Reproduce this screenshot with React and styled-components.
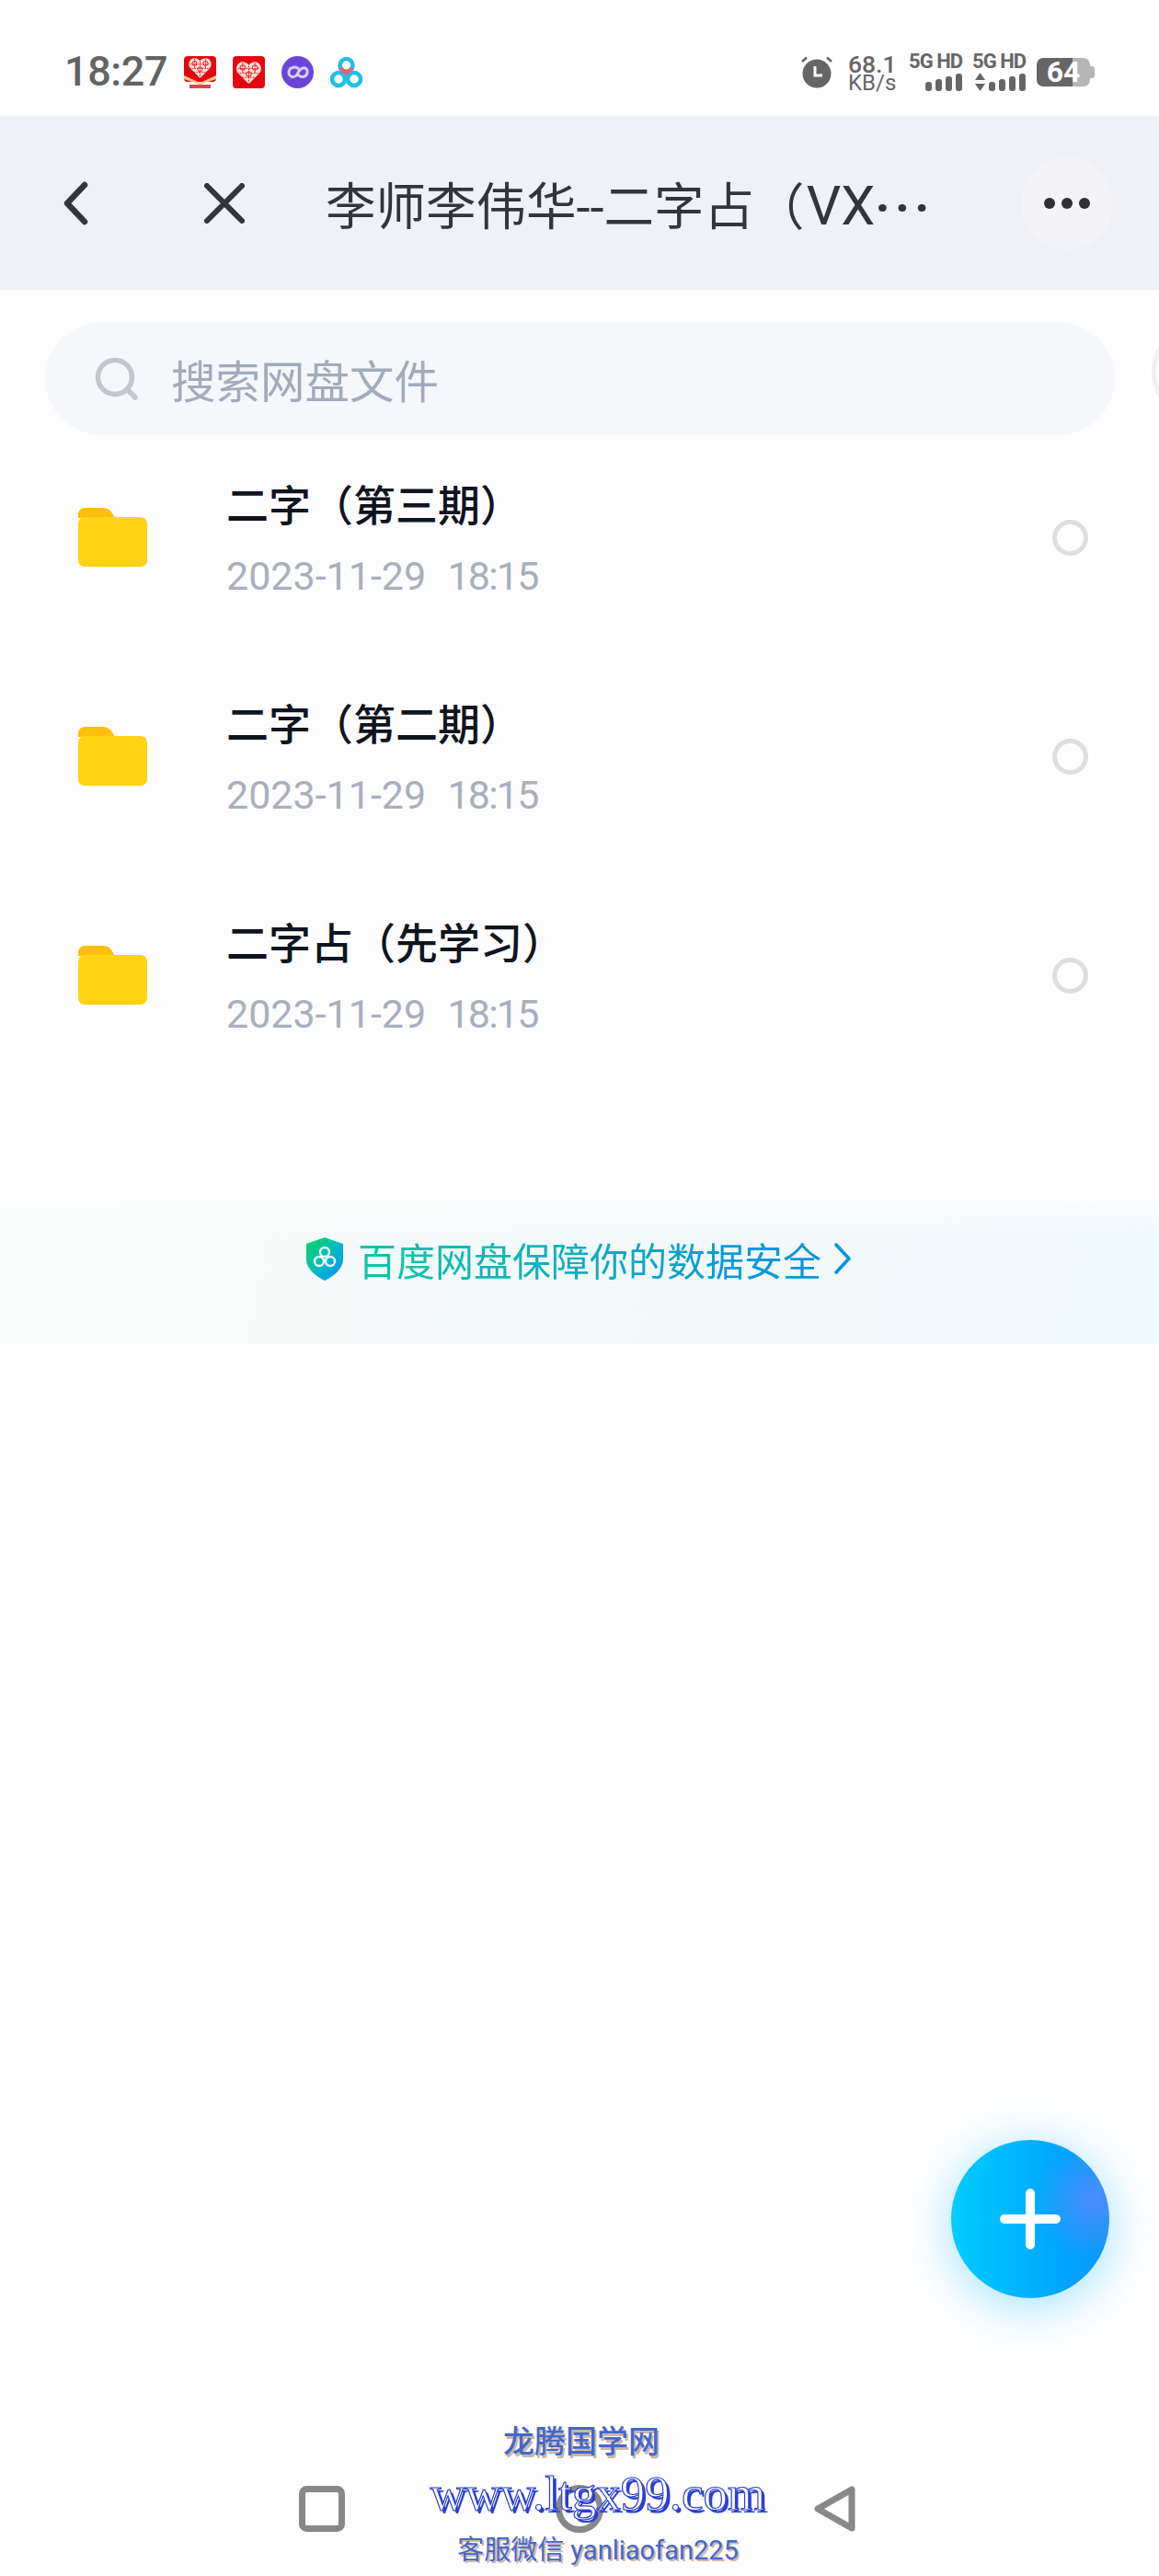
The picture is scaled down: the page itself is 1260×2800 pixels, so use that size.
import React from "react";
import styled, { createGlobalStyle } from "styled-components";

const GlobalStyle = createGlobalStyle`
  html, body {
    margin: 0;
    padding: 0;
    background: #fdfdfe;
  }
  * {
    box-sizing: border-box;
  }
`;

const CJK = `Roboto, "Noto Sans CJK SC", sans-serif`;

const Page = styled.div`
  position: relative;
  display: flex;
  flex-direction: column;
  width: 1260px;
  height: 2800px;
  overflow: hidden;
  background: #fdfdfe;
  font-family: ${CJK};
`;

const StatusBar = styled.div`
  display: flex;
  align-items: center;
  justify-content: space-between;
  height: 126px;
  padding: 30px 70px 0 70px;
  background: #fefefe;
`;

const StatusLeft = styled.div`
  display: flex;
  align-items: center;
`;

const Clock = styled.span`
  width: 130px;
  margin-top: -2px;
  font-size: 45px;
  font-weight: 500;
  letter-spacing: -0.4px;
  color: #636363;
`;

const AppIcons = styled.div`
  display: flex;
  gap: 18px;
`;

const StatusRight = styled.div`
  display: flex;
  align-items: center;
  color: #666;
`;

const Speed = styled.div`
  display: flex;
  flex-direction: column;
  align-items: flex-start;
  width: 50px;
  margin: 4px 17px 0 16px;
  font-size: 26.5px;
  line-height: 21px;
  font-weight: 500;
  white-space: nowrap;
`;

const SpeedUnit = styled.span`
  font-size: 24px;
  font-weight: 400;
`;

const Network = styled.div`
  display: flex;
  flex-direction: column;
  align-items: flex-end;
  gap: 4px;
  width: 57px;
  margin-right: 12px;
`;

const NetworkLabel = styled.span`
  font-size: 22px;
  line-height: 18px;
  font-weight: 700;
  letter-spacing: -1px;
  white-space: nowrap;
`;

const Bars = styled.div`
  display: flex;
  align-items: flex-end;
  gap: 4px;
  height: 19px;
`;

const Bar = styled.i`
  display: block;
  width: 7px;
  height: ${({ $h }) => $h}px;
  border-radius: 3px;
  background: #666;
`;

const Battery = styled.div`
  position: relative;
  display: flex;
  align-items: center;
  justify-content: center;
  width: 58px;
  height: 31px;
  margin-right: 5px;
  border-radius: 7px;
  background: linear-gradient(90deg, #666 67%, #b6b6b6 67%);
  color: #fff;
  font-size: 32px;
  line-height: 31px;
  font-weight: 700;

  &::after {
    content: "";
    position: absolute;
    right: -5px;
    top: 9px;
    width: 5px;
    height: 13px;
    border-radius: 0 3px 3px 0;
    background: #b6b6b6;
  }
`;

const Toolbar = styled.div`
  display: flex;
  align-items: center;
  height: 189px;
  padding: 0 50px 0 68px;
  background: #eff1f6;
`;

const BackButton = styled.div`
  display: flex;
  width: 154px;
`;

const CloseButton = styled.div`
  display: flex;
  width: 132px;
`;

const Title = styled.div`
  font-size: 54.5px;
  color: #33353a;
  white-space: nowrap;
`;

const TitleLatin = styled.span`
  margin-left: 2px;
  font-size: 59px;
`;

const TitleDots = styled.span`
  font-weight: 700;
  letter-spacing: 5px;
`;

const MoreButton = styled.div`
  display: flex;
  align-items: center;
  justify-content: center;
  gap: 7px;
  width: 100px;
  height: 100px;
  margin-left: auto;
  border-radius: 50%;
  background: #f4f4f6;
`;

const MoreDot = styled.i`
  display: block;
  width: 12px;
  height: 12px;
  border-radius: 50%;
  background: #2e3036;
`;

const SearchRow = styled.div`
  padding: 35px 48px 0 49px;
`;

const SearchBox = styled.div`
  display: flex;
  align-items: center;
  gap: 36px;
  height: 123px;
  padding-left: 54px;
  border-radius: 62px;
  background: #f6f7fb;
`;

const SearchHint = styled.span`
  font-size: 48.5px;
  color: #a1abbb;
`;

const EdgeRing = styled.div`
  position: absolute;
  left: 1252px;
  top: 362px;
  width: 60px;
  height: 84px;
  border: 5px solid #f0f0f1;
  border-radius: 50%;
`;

const FileList = styled.div`
  margin-top: -8px;
`;

const FileRow = styled.div`
  display: flex;
  align-items: center;
  height: 238px;
  padding: 0 77px 0 85px;
`;

const FileText = styled.div`
  flex: 1;
  margin-left: 86px;
  padding-top: 2px;
`;

const FileName = styled.div`
  font-size: 46px;
  line-height: 62px;
  font-weight: 500;
  color: #10141e;
`;

const FileDate = styled.div`
  margin-top: 20px;
  font-size: 43px;
  line-height: 50px;
  color: #a9afbc;
  white-space: pre;
  word-spacing: 1px;
`;

const FileTime = styled.span`
  letter-spacing: -1.8px;
`;

const Radio = styled.div`
  width: 39px;
  height: 39px;
  border: 5px solid #dedede;
  border-radius: 50%;
`;

const Banner = styled.div`
  display: flex;
  align-items: center;
  justify-content: center;
  height: 166px;
  margin-top: 116px;
  padding: 0 2px 20px 0;
  background:
    linear-gradient(180deg, #fdfdfe 0%, rgba(253, 253, 254, 0) 30%),
    linear-gradient(100deg, #f8fbf9 0%, #f4f9fa 50%, #eff8fc 100%);
`;

const BannerText = styled.span`
  margin: 0 13px 0 15px;
  font-size: 42px;
  background: linear-gradient(90deg, #0fc6a4 0%, #0a91e0 100%);
  -webkit-background-clip: text;
  background-clip: text;
  color: transparent;
`;

const Spacer = styled.div`
  flex: 1;
`;

const Fab = styled.div`
  position: absolute;
  right: 54px;
  bottom: 302px;
  display: flex;
  align-items: center;
  justify-content: center;
  width: 172px;
  height: 172px;
  border-radius: 50%;
  background:
    radial-gradient(circle at 90% 38%, #4c8dff 0, rgba(76, 141, 255, 0) 34%),
    linear-gradient(90deg, #00cdff 0%, #00a4ff 72%, #0a98f5 100%);
  box-shadow: 0 8px 50px rgba(0, 180, 255, 0.36);
`;

const NavBar = styled.div`
  display: flex;
  align-items: center;
  justify-content: space-between;
  height: 52px;
  margin-bottom: 47px;
  padding: 0 329px 0 325px;
`;

const Watermark = styled.div`
  position: absolute;
  left: 0;
  right: 0;
  top: 2630px;
  display: flex;
  flex-direction: column;
  align-items: center;
  padding-left: 40px;
  white-space: nowrap;
`;

const MarkTitle = styled.div`
  margin-right: 36px;
  font-size: 34px;
  line-height: 48px;
  font-weight: 500;
  color: #4566cc;
  text-shadow: 2px 3px 0 #c9b6a8;
`;

const MarkSite = styled.div`
  margin-top: 1px;
  font-family: "Liberation Serif", serif;
  font-size: 53px;
  line-height: 62px;
  color: #fff;
  -webkit-text-stroke: 1.2px #2a3fd0;
  text-shadow: 3px 3px 0 #2a3fd0;
`;

const MarkContact = styled.div`
  margin-top: 9px;
  font-size: 29px;
  line-height: 44px;
  color: #4566cc;
  text-shadow: 2px 2px 0 #cdb9aa;
`;

const HEART = "M17.5 33 L4 19.5 C0 14 3.5 6 10 6 C13 6 16 7.5 17.5 10 C19 7.5 22 6 25 6 C31.5 6 35 14 31 19.5 Z";

// pinduoduo style heart, withBand adds the tan strip under the heart
const HeartIcon = ({ withBand }) => (
  <svg width="35" height="35" viewBox="0 0 35 35">
    <rect width="35" height={withBand ? 28 : 35} rx="4" fill="#e4060f" />
    {withBand && <path d="M0 21 L17.5 29 L35 21 V25 L17.5 31 L0 25 Z" fill="#f5c892" />}
    {withBand && <rect x="6" y="31" width="23" height="4" fill="#d8484c" />}
    <g transform={withBand ? "translate(3.5 -2.5) scale(.8)" : "translate(2 1) scale(.885)"}>
      <path d={HEART} fill="#f8dfd9" />
      <g stroke="#e4060f" strokeWidth="1.1" fill="none">
        <path d="M17.5 11 V32 M4 14 H31 M3 20 H32 M9 25 H26 M10 7 V20 M25 7 V20" strokeDasharray="2 1.4" />
        <circle cx="10" cy="13" r="3.2" />
        <circle cx="25" cy="13" r="3.2" />
        <circle cx="17.5" cy="21" r="3.2" />
      </g>
    </g>
  </svg>
);

const LoopIcon = () => (
  <svg width="35" height="35" viewBox="0 0 35 35">
    <circle cx="17.5" cy="17.5" r="17.5" fill="#6b45d8" />
    <path
      d="M19 14.5 C16.5 11 9 11 8 17 C7.5 22.5 14 24.5 17 20 C19 16 21.5 12 25.5 13 C30 14.5 28.5 22.5 22.5 22.5 C21 22.5 20 22 19 21"
      fill="none"
      stroke="#d9cdf8"
      strokeWidth="3"
      strokeLinecap="round"
    />
  </svg>
);

const CloudIcon = () => (
  <svg width="35" height="35" viewBox="0 0 35 35" fill="none" strokeWidth="4.5">
    <circle cx="9" cy="25" r="7" stroke="#1fbfe8" />
    <circle cx="26" cy="25" r="7" stroke="#1fbfe8" />
    <circle cx="17.5" cy="10" r="7" stroke="#1fbfe8" />
    <path d="M11.5 13 A7 7 0 0 0 17.5 17 A7 7 0 0 0 23.5 13" stroke="#e8607a" />
    <path d="M13 15 L17.5 22 L22 15 Z" fill="#e8607a" stroke="none" />
  </svg>
);

const AlarmIcon = () => (
  <svg width="36" height="36" viewBox="0 0 36 36">
    <circle cx="18" cy="20" r="15.5" fill="#666" />
    <path d="M16 12 V22 H24" fill="none" stroke="#fff" strokeWidth="3" />
    <path d="M2 7 L7 2.5 M34 7 L29 2.5" stroke="#666" strokeWidth="2.6" />
  </svg>
);

const ArrowsIcon = () => (
  <svg width="11" height="20" viewBox="0 0 11 20" fill="#666">
    <path d="M5.5 0 L11 8 H0 Z M0 12 H11 L5.5 20 Z" />
  </svg>
);

const ChevronLeft = () => (
  <svg width="28" height="48" viewBox="0 0 28 48" fill="none">
    <path d="M24 4 L5 24 L24 44" stroke="#33353a" strokeWidth="6.5" strokeLinecap="round" strokeLinejoin="round" />
  </svg>
);

const CloseIcon = () => (
  <svg width="44" height="44" viewBox="0 0 44 44" fill="none">
    <path d="M3 3 L41 41 M41 3 L3 41" stroke="#33353a" strokeWidth="6" strokeLinecap="round" />
  </svg>
);

const SearchIcon = () => (
  <svg width="47" height="47" viewBox="0 0 47 47" fill="none" stroke="#c3c7cd" strokeWidth="5.5">
    <circle cx="22" cy="22" r="18.5" />
    <path d="M35 35 L44 44" strokeLinecap="round" />
  </svg>
);

const FolderIcon = () => (
  <svg width="75" height="64" viewBox="0 0 75 64">
    <path d="M0 8 Q0 0 8 0 H27 Q34 0 37 6 L40 11 H0 Z" fill="#fdbf0b" />
    <rect x="0" y="10" width="75" height="54" rx="7" fill="#fdd314" />
  </svg>
);

const ShieldIcon = () => (
  <svg width="42" height="47" viewBox="0 0 42 47">
    <defs>
      <linearGradient id="shield" x1="0" y1="0" x2="1" y2="1">
        <stop offset="0" stopColor="#08d65c" />
        <stop offset="0.55" stopColor="#07b8c8" />
        <stop offset="1" stopColor="#0a8cff" />
      </linearGradient>
    </defs>
    <path d="M21 0 L41 7 V24 C41 34 31 42 21 47 C11 42 1 34 1 24 V7 Z" fill="url(#shield)" />
    <g fill="none" stroke="#e8fbf6" strokeWidth="2.4">
      <circle cx="21" cy="16" r="5" />
      <circle cx="15" cy="26" r="5" />
      <circle cx="27" cy="26" r="5" />
    </g>
  </svg>
);

const ChevronRight = () => (
  <svg width="20" height="36" viewBox="0 0 20 36" fill="none">
    <path d="M3 3 L17 18 L3 33" stroke="#0a91e0" strokeWidth="3.6" strokeLinecap="round" strokeLinejoin="round" />
  </svg>
);

const PlusIcon = () => (
  <svg width="66" height="66" viewBox="0 0 66 66">
    <path d="M33 5 V61 M5 33 H61" stroke="#fff" strokeWidth="10" strokeLinecap="round" />
  </svg>
);

const NavSquare = () => (
  <svg width="50" height="50" viewBox="0 0 50 50" fill="none">
    <rect x="3.5" y="3.5" width="43" height="43" rx="5" stroke="#888" strokeWidth="7" />
  </svg>
);

const NavCircle = () => (
  <svg width="52" height="52" viewBox="0 0 52 52" fill="none">
    <circle cx="26" cy="26" r="22.5" stroke="#888" strokeWidth="7" />
  </svg>
);

const NavBack = () => (
  <svg width="46" height="50" viewBox="0 0 46 50" fill="none">
    <path d="M41 4 V46 L4 25 Z" stroke="#888" strokeWidth="7" strokeLinejoin="round" />
  </svg>
);

const files = [
  { name: "二字（第三期）", date: "2023-11-29  ", time: "18:15" },
  { name: "二字（第二期）", date: "2023-11-29  ", time: "18:15" },
  { name: "二字占（先学习）", date: "2023-11-29  ", time: "18:15" },
];

const SignalBars = () => (
  <Bars>
    {[10, 13, 16, 19].map((h) => (
      <Bar key={h} $h={h} />
    ))}
  </Bars>
);

const App = () => {
  return (
    <Page>
      <GlobalStyle />
      <StatusBar>
        <StatusLeft>
          <Clock>18:27</Clock>
          <AppIcons>
            <HeartIcon withBand />
            <HeartIcon />
            <LoopIcon />
            <CloudIcon />
          </AppIcons>
        </StatusLeft>
        <StatusRight>
          <AlarmIcon />
          <Speed>
            <span>68.1</span>
            <SpeedUnit>KB/s</SpeedUnit>
          </Speed>
          <Network>
            <NetworkLabel>5G HD</NetworkLabel>
            <SignalBars />
          </Network>
          <Network>
            <NetworkLabel>5G HD</NetworkLabel>
            <Bars>
              <ArrowsIcon />
              <SignalBars />
            </Bars>
          </Network>
          <Battery>64</Battery>
        </StatusRight>
      </StatusBar>

      <Toolbar>
        <BackButton>
          <ChevronLeft />
        </BackButton>
        <CloseButton>
          <CloseIcon />
        </CloseButton>
        <Title>
          李师李伟华--二字占（<TitleLatin>VX</TitleLatin>
          <TitleDots>···</TitleDots>
        </Title>
        <MoreButton>
          <MoreDot />
          <MoreDot />
          <MoreDot />
        </MoreButton>
      </Toolbar>

      <SearchRow>
        <SearchBox>
          <SearchIcon />
          <SearchHint>搜索网盘文件</SearchHint>
        </SearchBox>
      </SearchRow>
      <EdgeRing />

      <FileList>
        {files.map((file) => (
          <FileRow key={file.name}>
            <FolderIcon />
            <FileText>
              <FileName>{file.name}</FileName>
              <FileDate>
                {file.date}
                <FileTime>{file.time}</FileTime>
              </FileDate>
            </FileText>
            <Radio />
          </FileRow>
        ))}
      </FileList>

      <Banner>
        <ShieldIcon />
        <BannerText>百度网盘保障你的数据安全</BannerText>
        <ChevronRight />
      </Banner>

      <Spacer />

      <Fab>
        <PlusIcon />
      </Fab>

      <NavBar>
        <NavSquare />
        <NavCircle />
        <NavBack />
      </NavBar>

      <Watermark>
        <MarkTitle>龙腾国学网</MarkTitle>
        <MarkSite>www.ltgx99.com</MarkSite>
        <MarkContact>客服微信 yanliaofan225</MarkContact>
      </Watermark>
    </Page>
  );
};

export default App;
